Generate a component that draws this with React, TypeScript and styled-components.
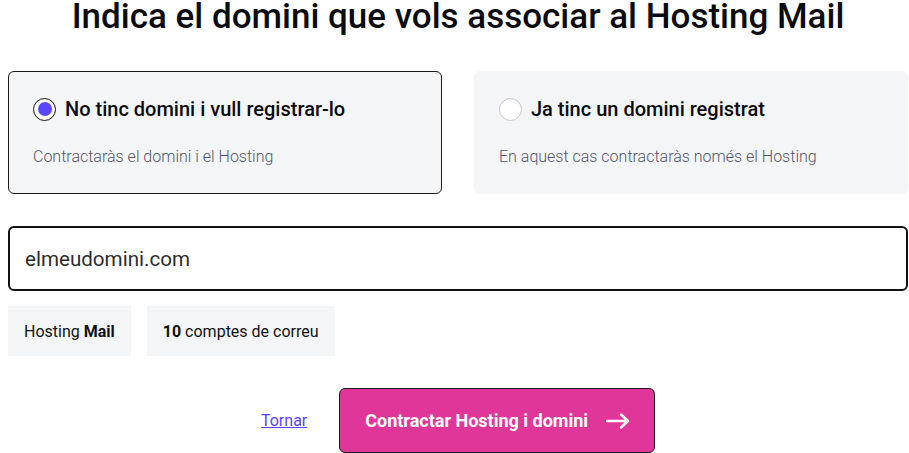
import React, { useState } from 'react';
import styled, { createGlobalStyle } from 'styled-components';

const GlobalStyle = createGlobalStyle`
  body {
    margin: 0;
    padding: 0 1px 0 8px;
    background: #ffffff;
    font-family: Roboto, "Liberation Sans", Arial, sans-serif;
    color: #111111;
  }
`;

const Page = styled.div`
  display: flex;
  flex-direction: column;
`;

const Title = styled.h1`
  margin: 0;
  height: 38px;
  font-size: 35px;
  line-height: 34px;
  font-weight: 500;
  text-align: center;
  color: #0b0b0f;
`;

const Options = styled.div`
  display: grid;
  grid-template-columns: 1fr 1fr;
  gap: 32px;
  margin-top: 33px;
`;

const OptionCard = styled.label<{ $selected?: boolean }>`
  display: flex;
  flex-direction: column;
  gap: 26px;
  height: 123px;
  box-sizing: border-box;
  padding: 25px 24px 0;
  background: #f4f5f7;
  border: 1px solid ${p => (p.$selected ? '#1a1a1a' : 'transparent')};
  border-radius: 6px;
  cursor: pointer;
`;

const OptionHead = styled.div`
  display: flex;
  align-items: center;
  gap: 9px;
  font-size: 20px;
  line-height: 24px;
  font-weight: 500;
  color: #0b0b0f;
`;

const Radio = styled.span<{ $checked?: boolean }>`
  width: 23px;
  height: 23px;
  box-sizing: border-box;
  border-radius: 50%;
  border: ${p => (p.$checked ? '1.5px solid #111' : '1px solid #c9c9cc')};
  background: #ffffff;
  display: flex;
  align-items: center;
  justify-content: center;

  &::after {
    content: '';
    width: 14px;
    height: 14px;
    border-radius: 50%;
    background: ${p => (p.$checked ? '#5a45ff' : 'transparent')};
  }
`;

const OptionDesc = styled.div`
  font-size: 16px;
  line-height: 20px;
  font-weight: 300;
  color: #55556a;
`;

const DomainInput = styled.input`
  margin-top: 32px;
  height: 65px;
  box-sizing: border-box;
  width: 100%;
  padding: 0 15px;
  border: 2px solid #111111;
  border-radius: 6px;
  font-family: inherit;
  font-size: 20.6px;
  color: #2d2d2d;
  outline: none;
`;

const Chips = styled.div`
  display: flex;
  gap: 16px;
  margin-top: 15px;
`;

const Chip = styled.div`
  height: 50px;
  display: flex;
  align-items: center;
  padding: 0 16px;
  background: #f4f5f7;
  font-size: 16px;
  color: #111111;

  b {
    font-weight: 700;
    white-space: pre;
  }
`;

const Actions = styled.div`
  display: flex;
  justify-content: center;
  align-items: center;
  gap: 32px;
  margin-top: 32px;
`;

const BackLink = styled.a`
  font-size: 16px;
  color: #5a45ff;
  text-decoration: underline;
  cursor: pointer;
`;

const SubmitButton = styled.button`
  display: flex;
  align-items: center;
  gap: 18px;
  height: 65px;
  box-sizing: border-box;
  padding: 0 24px 0 25px;
  background: #e0369a;
  border: 1px solid #1a1a1a;
  border-radius: 6px;
  font-family: inherit;
  font-size: 18px;
  font-weight: 700;
  color: #ffffff;
  cursor: pointer;
`;

const ArrowIcon = () => (
  <svg width="24" height="16" viewBox="0 0 24 16" fill="none">
    <path d="M1 8h21M15 1.5L22 8l-7 6.5" stroke="#fff" strokeWidth="2.4" strokeLinecap="round" strokeLinejoin="round" />
  </svg>
);

const App: React.FC = () => {
  const [choice, setChoice] = useState<'new' | 'own'>('new');

  return (
    <Page>
      <GlobalStyle />
      <Title>Indica el domini que vols associar al Hosting Mail</Title>

      <Options>
        <OptionCard $selected={choice === 'new'} onClick={() => setChoice('new')}>
          <OptionHead>
            <Radio $checked={choice === 'new'} />
            No tinc domini i vull registrar-lo
          </OptionHead>
          <OptionDesc>Contractaràs el domini i el Hosting</OptionDesc>
        </OptionCard>
        <OptionCard $selected={choice === 'own'} onClick={() => setChoice('own')}>
          <OptionHead>
            <Radio $checked={choice === 'own'} />
            Ja tinc un domini registrat
          </OptionHead>
          <OptionDesc>En aquest cas contractaràs només el Hosting</OptionDesc>
        </OptionCard>
      </Options>

      <DomainInput defaultValue="elmeudomini.com" />

      <Chips>
        <Chip>Hosting <b> Mail</b></Chip>
        <Chip><b>10 </b>comptes de correu</Chip>
      </Chips>

      <Actions>
        <BackLink>Tornar</BackLink>
        <SubmitButton>
          Contractar Hosting i domini
          <ArrowIcon />
        </SubmitButton>
      </Actions>
    </Page>
  );
};

export default App;
